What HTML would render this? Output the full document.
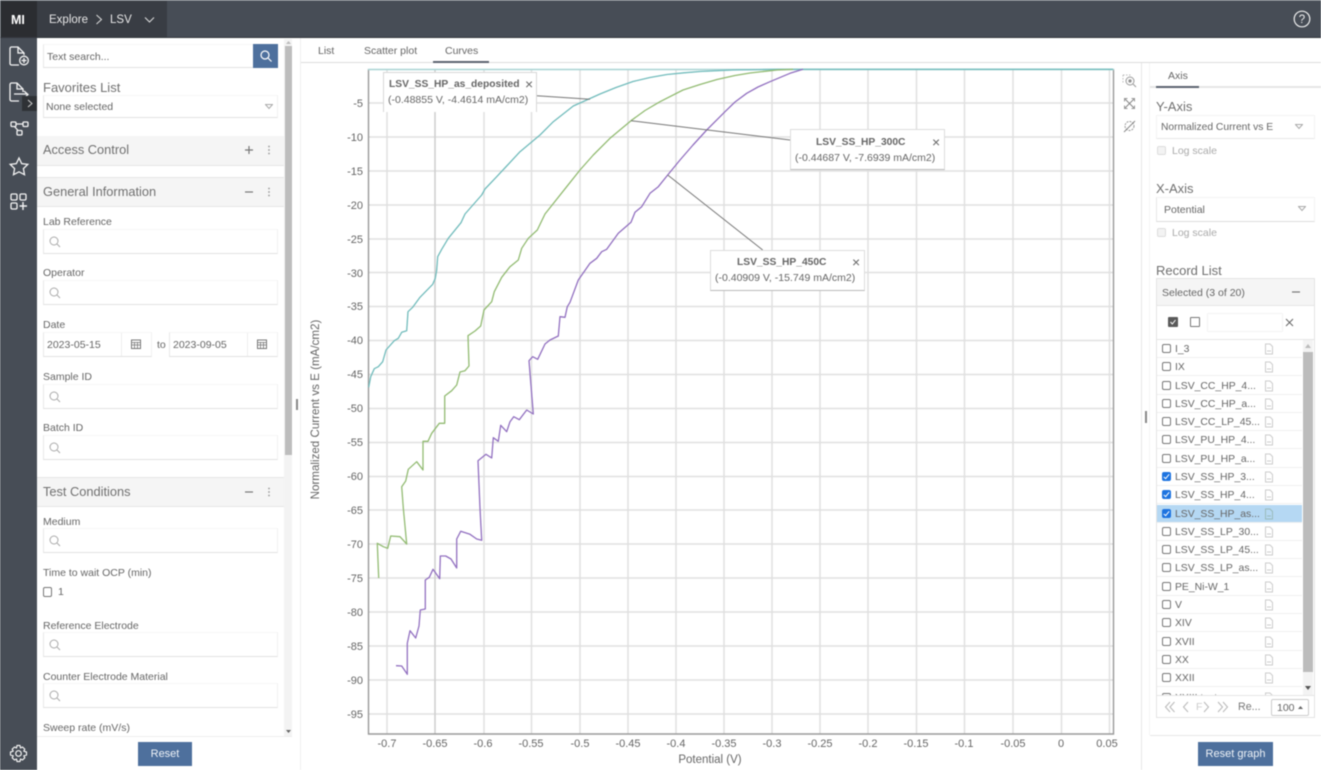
<!DOCTYPE html>
<html><head><meta charset="utf-8"><title>LSV</title>
<style>
html,body{margin:0;padding:0;width:1321px;height:770px;overflow:hidden;background:#fff}
body{font-family:"Liberation Sans",sans-serif;color:#666;position:relative}
#r{position:absolute;left:0;top:0;width:1321px;height:770px;overflow:hidden;filter:blur(.4px)}
.a{position:absolute;box-sizing:border-box}
.t{position:absolute;white-space:nowrap;line-height:14px;font-size:10.5px;color:#666;margin-top:1px}
.h{font-size:12.8px;color:#707070}
.n{margin-top:0}
.x{font-size:14px;font-weight:normal;color:#666}
.ti{font-weight:bold;font-size:10.25px}
.in{position:absolute;box-sizing:border-box;left:43px;width:235px;height:25px;background:#fff;border:1px solid #f2f2f2;border-top-color:#f6f6f6;border-left-color:#e8e8e8;border-bottom-color:#e2e2e2}
.in svg{position:absolute;left:4px;top:5px}
.sec{position:absolute;left:37px;width:247px;height:30px;background:#f5f5f5;border-bottom:1px solid #e6e6e6;box-sizing:border-box}
.btn{position:absolute;background:#4e709d;color:#eef2f7;font-size:11px;text-align:center;line-height:24px;top:742px;height:24px}
.row{position:absolute;left:1157px;width:145px;height:18px;border-bottom:1px solid #f0f0f0;box-sizing:border-box}
.row b{position:absolute;left:5px;top:4px;width:9px;height:9px;border:1px solid #777;border-radius:2px;background:#fff;box-sizing:border-box}
.row b.c{background:#1e74e0;border-color:#1e74e0}
.row b.c:after{content:"";position:absolute;left:2px;top:0;width:2px;height:5px;border:solid #fff;border-width:0 1.2px 1.2px 0;transform:rotate(40deg)}
.row span{position:absolute;left:18px;top:3px;font-size:10.4px;line-height:14px;color:#666;white-space:nowrap}
.row svg{position:absolute;left:107px;top:3px}
</style></head><body><div id="r">

<!-- top bar -->
<div class="a" style="left:0;top:0;width:1321px;height:38px;background:#474d56;border-bottom:1px solid #33373d"></div>
<div class="a" style="left:0;top:0;width:1321px;height:1px;background:#6b7178"></div>
<div class="a" style="left:37px;top:1px;width:130px;height:36px;background:#393d44"></div>
<div class="a" style="left:1px;top:1px;width:36px;height:36px;background:#2b2d31"></div>
<div class="t" style="left:11px;top:12px;font-size:12.5px;font-weight:bold;color:#fff">MI</div>
<div class="t" style="left:49px;top:12px;font-size:11.5px;color:#e8e8e8">Explore</div>
<svg class="a" style="left:95px;top:14px" width="8" height="11"><path d="M1.500 1 L6.500 5.500 L1.500 10" fill="none" stroke="#ddd" stroke-width="1"/></svg>
<div class="t" style="left:110px;top:12px;font-size:11.5px;color:#e8e8e8">LSV</div>
<svg class="a" style="left:144px;top:16px" width="11" height="8"><path d="M1 1.500 L5.500 6 L10 1.500" fill="none" stroke="#ddd" stroke-width="1"/></svg>
<svg class="a" style="left:1293px;top:10px" width="18" height="18"><circle cx="9" cy="9" r="7.800" fill="none" stroke="#eee" stroke-width="1.200"/><text x="9" y="13" font-size="11.500" font-family="Liberation Sans" fill="#eee" text-anchor="middle">?</text></svg>

<!-- left rail -->
<div class="a" style="left:0;top:38px;width:37px;height:732px;background:#474d56"></div>
<svg class="a" style="left:0;top:38px" width="37" height="180" fill="none" stroke="#f4f4f4" stroke-width="1.300">
<path d="M10 21 V10.500 a1.500 1.500 0 0 1 1.500-1.500 H18 L24 15 V17 M18 9 V15 H24 M19 27 H11.500 A1.500 1.500 0 0 1 10 25.500 V21"/>
<circle cx="24" cy="22.500" r="4.300"/><path d="M24 20 V25 M21.500 22.500 H26.500"/>
<path d="M10 57 V46.500 a1.500 1.500 0 0 1 1.500-1.500 H17 L23 51 V54 M17 45 V51 H23 M10 57 V61.500 A1.500 1.500 0 0 0 11.500 63 H19"/>
<path d="M14 56 H27 M24 53 L28 56.500 L24 60"/>
<rect x="11" y="84" width="5" height="4.500" rx="1"/><rect x="23" y="84" width="5" height="4.500" rx="1"/><rect x="17" y="92.500" width="5" height="4.500" rx="1"/>
<path d="M16 86 H23 M14.500 88.500 L18 92.500"/>
<path d="M19 120 L21.700 125.600 L27.800 126.400 L23.400 130.600 L24.500 136.700 L19 133.800 L13.500 136.700 L14.600 130.600 L10.200 126.400 L16.300 125.600 Z"/>
<rect x="11" y="156" width="6" height="6" rx="1.200"/><rect x="20" y="156" width="6" height="6" rx="1.200"/><rect x="11" y="165" width="6" height="6" rx="1.200"/>
<path d="M23 164 V172 M19.500 168 H27" stroke-width="1.400"/>
</svg>
<div class="a" style="left:22px;top:96px;width:15px;height:15px;background:#2f3236"></div>
<svg class="a" style="left:26px;top:99px" width="8" height="9"><path d="M2 1 L6 4.500 L2 8" fill="none" stroke="#ccc" stroke-width="1"/></svg>
<svg class="a" style="left:9px;top:744px" width="19" height="19" viewBox="0 0 19 19" fill="none" stroke="#f4f4f4" stroke-width="1.200"><circle cx="9.500" cy="9.500" r="2.800"/><path d="M8 1.500 H11 L11.500 4 L13.500 3 L15.800 5.200 L14.800 7.200 L17.500 8 V11 L14.800 11.800 L15.800 13.800 L13.500 16 L11.500 15 L11 17.500 H8 L7.500 15 L5.500 16 L3.200 13.800 L4.200 11.800 L1.500 11 V8 L4.200 7.200 L3.200 5.200 L5.500 3 L7.500 4 Z" stroke-linejoin="round"/></svg>

<!-- left panel -->
<div class="in" style="top:44px;width:211px;height:24px"></div>
<div class="t" style="left:47px;top:49px">Text search...</div>
<div class="a" style="left:253px;top:44px;width:25px;height:24px;background:#4e709d"></div>
<svg class="a" style="left:259px;top:49px" width="14" height="14" fill="none" stroke="#fff" stroke-width="1.200"><circle cx="6" cy="6" r="4"/><path d="M9 9 L12.500 12.500"/></svg>
<div class="t h" style="left:43px;top:80px;font-size:13px">Favorites List</div>
<div class="in" style="top:95px;height:23px"></div>
<div class="t" style="left:46px;top:99px">None selected</div>
<svg class="a" style="left:265px;top:104px" width="8" height="6"><path d="M.500 .500 H7.500 L4 4.500 Z" fill="none" stroke="#aaa"/></svg>

<div class="sec" style="top:136px"></div>
<div class="t h n" style="left:43px;top:143px">Access Control</div>
<svg class="a" style="left:244px;top:145px" width="10" height="10"><path d="M5 1 V9 M1 5 H9" stroke="#777" stroke-width="1.200"/></svg>
<svg class="a" style="left:267px;top:145px" width="4" height="10" fill="#999"><circle cx="2" cy="1.500" r=".9"/><circle cx="2" cy="5" r=".9"/><circle cx="2" cy="8.500" r=".9"/></svg>
<div class="sec" style="top:177px;border-top:1px solid #e6e6e6"></div>
<div class="t h n" style="left:43px;top:185px">General Information</div>
<svg class="a" style="left:244px;top:187px" width="10" height="10"><path d="M1 5 H9" stroke="#777" stroke-width="1.200"/></svg>
<svg class="a" style="left:267px;top:187px" width="4" height="10" fill="#999"><circle cx="2" cy="1.500" r=".9"/><circle cx="2" cy="5" r=".9"/><circle cx="2" cy="8.500" r=".9"/></svg>

<div class="t" style="left:43px;top:214px">Lab Reference</div>
<div class="in" style="top:229px"><svg width="14" height="14" fill="none" stroke="#aaa"><circle cx="6" cy="6" r="4"/><path d="M9 9 L12 12"/></svg></div>
<div class="t" style="left:43px;top:265px">Operator</div>
<div class="in" style="top:280px"><svg width="14" height="14" fill="none" stroke="#aaa"><circle cx="6" cy="6" r="4"/><path d="M9 9 L12 12"/></svg></div>
<div class="t" style="left:43px;top:317px">Date</div>
<div class="in" style="top:332px;width:109px"></div>
<div class="a" style="left:121px;top:333px;width:1px;height:23px;background:#eee"></div>
<div class="t" style="left:47px;top:337px">2023-05-15</div>
<svg class="a" style="left:131px;top:339px" width="10" height="10"><rect x=".5" y="1" width="9" height="8.500" fill="#fff" stroke="#777"/><path d="M.5 3.500 H9.500 M.5 6 H9.500 M3.500 3 V9 M6.500 3 V9" stroke="#777" stroke-width=".8"/></svg>
<div class="t" style="left:157px;top:337px">to</div>
<div class="in" style="top:332px;left:169px;width:109px"></div>
<div class="a" style="left:247px;top:333px;width:1px;height:23px;background:#eee"></div>
<div class="t" style="left:173px;top:337px">2023-09-05</div>
<svg class="a" style="left:257px;top:339px" width="10" height="10"><rect x=".5" y="1" width="9" height="8.500" fill="#fff" stroke="#777"/><path d="M.5 3.500 H9.500 M.5 6 H9.500 M3.500 3 V9 M6.500 3 V9" stroke="#777" stroke-width=".8"/></svg>
<div class="t" style="left:43px;top:369px">Sample ID</div>
<div class="in" style="top:384px"><svg width="14" height="14" fill="none" stroke="#aaa"><circle cx="6" cy="6" r="4"/><path d="M9 9 L12 12"/></svg></div>
<div class="t" style="left:43px;top:420px">Batch ID</div>
<div class="in" style="top:435px"><svg width="14" height="14" fill="none" stroke="#aaa"><circle cx="6" cy="6" r="4"/><path d="M9 9 L12 12"/></svg></div>

<div class="sec" style="top:477px;border-top:1px solid #e6e6e6"></div>
<div class="t h n" style="left:43px;top:485px">Test Conditions</div>
<svg class="a" style="left:244px;top:487px" width="10" height="10"><path d="M1 5 H9" stroke="#777" stroke-width="1.200"/></svg>
<svg class="a" style="left:267px;top:487px" width="4" height="10" fill="#999"><circle cx="2" cy="1.500" r=".9"/><circle cx="2" cy="5" r=".9"/><circle cx="2" cy="8.500" r=".9"/></svg>
<div class="t" style="left:43px;top:514px">Medium</div>
<div class="in" style="top:528px"><svg width="14" height="14" fill="none" stroke="#aaa"><circle cx="6" cy="6" r="4"/><path d="M9 9 L12 12"/></svg></div>
<div class="t" style="left:43px;top:565px">Time to wait OCP (min)</div>
<div class="a" style="left:43px;top:587px;width:9px;height:10px;border:1px solid #777;border-radius:2px"></div>
<div class="t" style="left:58px;top:584px">1</div>
<div class="t" style="left:43px;top:618px">Reference Electrode</div>
<div class="in" style="top:632px"><svg width="14" height="14" fill="none" stroke="#aaa"><circle cx="6" cy="6" r="4"/><path d="M9 9 L12 12"/></svg></div>
<div class="t" style="left:43px;top:669px">Counter Electrode Material</div>
<div class="in" style="top:683px"><svg width="14" height="14" fill="none" stroke="#aaa"><circle cx="6" cy="6" r="4"/><path d="M9 9 L12 12"/></svg></div>
<div class="t" style="left:43px;top:720px">Sweep rate (mV/s)</div>
<div class="a" style="left:37px;top:736px;width:255px;height:34px;background:#fff;border-top:1px solid #eee"></div>
<div class="a" style="left:284px;top:39px;width:8px;height:697px;background:#f3f3f3"></div>
<div class="a" style="left:285px;top:46px;width:7px;height:409px;background:#bdbdbd"></div>
<svg class="a" style="left:285px;top:40px" width="7" height="5"><path d="M3.500 1 L6 4 H1 Z" fill="#bbb"/></svg>
<svg class="a" style="left:285px;top:729px" width="7" height="5"><path d="M3.500 4 L6 1 H1 Z" fill="#666"/></svg>
<div class="btn" style="left:138px;width:54px">Reset</div>
<div class="a" style="left:296px;top:399px;width:2px;height:11px;background:#888"></div>
<div class="a" style="left:300px;top:38px;width:1px;height:732px;background:#f0f0f0"></div>

<!-- tabs -->
<div class="t" style="left:318px;top:43px">List</div>
<div class="t" style="left:364px;top:43px">Scatter plot</div>
<div class="t" style="left:445px;top:43px">Curves</div>
<div class="a" style="left:301px;top:62px;width:1020px;height:1px;background:#ddd"></div>
<div class="a" style="left:433px;top:61px;width:56px;height:2px;background:#5c6470"></div>

<!-- chart -->
<svg class="a" style="left:301px;top:63px" width="840" height="707" viewBox="301 63 840 707">
<g stroke="#e0e0e0" stroke-width="1.500" fill="none">
<path d="M369 103H1113M369 137H1113M369 171H1113M369 205H1113M369 239H1113M369 272.500H1113M369 306.500H1113M369 340.500H1113M369 374.500H1113M369 408.500H1113M369 442.500H1113M369 476.500H1113M369 510H1113M369 544H1113M369 578H1113M369 612H1113M369 646H1113M369 680H1113M369 714H1113"/>
<path d="M387 69V734M531.500 69V734M628 69V734M724 69V734M772 69V734M868 69V734M964.500 69V734M1013 69V734M1061.500 69V734M1109.500 69V734M484 69V734M580 69V734M676 69V734M820 69V734M916.500 69V734"/>
<path d="M435 69V734" stroke="#cdcdcd"/>
</g>
<path d="M368.500 69V734H1113.500V69" fill="none" stroke="#9a9a9a" stroke-width="1.400"/>
<path d="M368 69.500H1114" stroke="#a9d3d3" stroke-width="1.600"/>

<g fill="#666" font-size="11" font-family="Liberation Sans" text-anchor="end">
<text x="363" y="107">-5</text><text x="363" y="141">-10</text><text x="363" y="175">-15</text><text x="363" y="209">-20</text><text x="363" y="243">-25</text><text x="363" y="277">-30</text><text x="363" y="310">-35</text><text x="363" y="344">-40</text><text x="363" y="378">-45</text><text x="363" y="412">-50</text><text x="363" y="446">-55</text><text x="363" y="480">-60</text><text x="363" y="514">-65</text><text x="363" y="548">-70</text><text x="363" y="582">-75</text><text x="363" y="616">-80</text><text x="363" y="650">-85</text><text x="363" y="684">-90</text><text x="363" y="718">-95</text>
</g>
<g fill="#666" font-size="11" font-family="Liberation Sans" text-anchor="middle">
<text x="387" y="747">-0.7</text><text x="435" y="747">-0.65</text><text x="483" y="747">-0.6</text><text x="531" y="747">-0.55</text><text x="580" y="747">-0.5</text><text x="628" y="747">-0.45</text><text x="676" y="747">-0.4</text><text x="724" y="747">-0.35</text><text x="772" y="747">-0.3</text><text x="820" y="747">-0.25</text><text x="868" y="747">-0.2</text><text x="916" y="747">-0.15</text><text x="964" y="747">-0.1</text><text x="1013" y="747">-0.05</text><text x="1061" y="747">0</text><text x="1107" y="747">0.05</text>
<text x="710" y="763" font-size="11.500">Potential (V)</text>
<text transform="translate(319,409.500) rotate(-90)" font-size="11.600">Normalized Current vs E (mA/cm2)</text>
</g>

<g fill="none" stroke-width="1.300" stroke-linejoin="round">
<path stroke="#72bcbc" d="M368.700 387.300L370.700 376.700L374.300 368.700L378.300 366.700L382.700 361.700L386 350L394.300 340.700L398.300 338.300L401.700 332.300L406.700 330.700L408 311.700L412.700 307.300L420 297.300L432.700 284.300L435.300 278.300L436.700 270L437.700 256.700L441.700 249.300L448.300 238.300L461 222.700L465 214L481.700 195L485 189L496.700 176.700L506.700 166L520 151.700L540 135L553.300 121.700L573.300 106L590 98.500L600 94L616 87.500L633 81.500L650 77.500L667 74.500L684 72.800L700 71.500L733 70L777 69.300L1113 69.300"/>
<path stroke="#92bb72" d="M378.700 578L377.300 543.300L383.300 546.700L387.700 548.300L390.700 536L400 536.700L406.700 544L403.300 508L401.700 486.700L405.700 481L408.300 469.300L416.700 461.700L423 470L423 441.300L428 441.300L431.700 433.300L439.300 423.300L444.700 423.300L444.700 396L451.700 390.700L456.700 385L460 372L465 370.700L469 366L468 335.700L475 331L480.700 326L484 310L491.700 301.700L494.300 291.700L501.700 277.300L510 266.700L518.300 260L521.700 248.300L528.300 238.300L537.300 230L545 214L566.700 186.700L580 170L593.300 155L610 138.300L631 120.700L645 110.500L660 101.700L683 90L700 84.500L717 79.500L735 75.500L750 73L777 70L793 69.300"/>
<path stroke="#9270c0" d="M396 665.700L401.700 666L407.300 674.300L407.300 643.300L410 630.700L415.700 638L419 626L420.300 610L425.300 609L425.300 580L429.300 577.300L433 569.300L439.700 578.700L440.300 556L445.700 556L451 559L456.700 568L456.700 539L460.700 531.300L470 534.300L476.700 539L481.700 540.300L480 508.300L478 460.700L486 454.300L491.700 458L493.300 437.700L498.300 441.300L500.700 425.300L506.700 431.700L510 421.700L513.700 416.700L519.300 419.700L526.700 410L533.300 414L529 360.700L532.700 356.700L537.700 359.300L545 344L550 340L558.300 336L560 316.700L565 317.300L567.300 306.700L570 302.300L578.300 280L590 263.300L596.700 258.300L601.700 251.700L606.700 249.300L618.300 233.300L631 222.300L635 212.300L641.700 206.700L650 193.300L658.300 186.700L667.700 175L680 160L693 145L706.700 130L725 111.700L735 102L746.700 93.300L758 87L770 81.700L790 73.300L803 69.300"/>
</g>
<g stroke="#777" stroke-width="1" fill="none">
<path d="M536.700 95.700L590 99.300"/><path d="M631 120.700L790 140"/><path d="M667.700 175L762.700 250"/>
</g>
</svg>

<!-- tooltips -->
<div class="a" style="left:383px;top:72px;width:154px;height:40px;background:#fff;border:1px solid #d8d8d8;border-bottom:0"></div>
<div class="t ti" style="left:389px;top:77px">LSV_SS_HP_as_deposited</div>
<div class="t x" style="left:525px;top:76px">×</div>
<div class="t" style="left:388px;top:92px">(-0.48855 V, -4.4614 mA/cm2)</div>

<div class="a" style="left:790px;top:129px;width:155px;height:41px;background:#fff;border:1px solid #ddd;border-bottom:1px solid #bbb"></div>
<div class="t ti" style="left:816px;top:135px">LSV_SS_HP_300C</div>
<div class="t x" style="left:932px;top:134px">×</div>
<div class="t" style="left:795px;top:150px">(-0.44687 V, -7.6939 mA/cm2)</div>

<div class="a" style="left:710px;top:250px;width:155px;height:41px;background:#fff;border:1px solid #ddd;border-bottom:1px solid #bbb"></div>
<div class="t ti" style="left:737px;top:255px">LSV_SS_HP_450C</div>
<div class="t x" style="left:852px;top:254px">×</div>
<div class="t" style="left:715px;top:270px">(-0.40909 V, -15.749 mA/cm2)</div>

<!-- toolbar -->
<svg class="a" style="left:1121px;top:72px" width="18" height="70" fill="none" stroke="#999">
<path d="M2 3H10M2 3V11" stroke-dasharray="1.500 1.500" stroke="#bbb"/><circle cx="9" cy="9" r="4"/><circle cx="9" cy="9" r="1.200" fill="#888"/><path d="M12 12L15 15"/>
<path d="M4 27L13 36M13 27L4 36" stroke="#888"/><path d="M3.500 29.500V26.500H6.500M10.500 26.500H13.500V29.500M13.500 33.500V36.500H10.500M6.500 36.500H3.500V33.500"/>
<circle cx="8.500" cy="54" r="4.500" stroke-dasharray="2 1"/><path d="M3 60L14 49" stroke="#888"/>
</svg>

<!-- right panel -->
<div class="a" style="left:1141px;top:63px;width:1px;height:707px;background:#e8e8e8"></div>
<div class="a" style="left:1149px;top:63px;width:1px;height:672px;background:#f6f6f6"></div>
<div class="a" style="left:1145px;top:411px;width:2px;height:12px;background:#888"></div>
<div class="t" style="left:1168px;top:68px">Axis</div>
<div class="a" style="left:1150px;top:86px;width:171px;height:2px;background:#e6e6e6"></div>
<div class="a" style="left:1156px;top:85.500px;width:43px;height:2px;background:#5c6470"></div>
<div class="t h" style="left:1156px;top:99px;font-size:13px">Y-Axis</div>
<div class="a" style="left:1156px;top:115px;width:159px;height:24px;border:1px solid #f4f4f4;border-bottom-color:#e8e8e8"></div>
<div class="t" style="left:1161px;top:120px;font-size:10.300px">Normalized Current vs E</div>
<svg class="a" style="left:1295px;top:124px" width="8" height="6"><path d="M.500 .500H7.500L4 4.500Z" fill="none" stroke="#aaa"/></svg>
<div class="a" style="left:1157px;top:146px;width:9px;height:9px;border:1px solid #ddd;background:#f3f3f3;border-radius:2px"></div>
<div class="t" style="left:1172px;top:143px;color:#aaa">Log scale</div>
<div class="t h n" style="left:1156px;top:182px;font-size:13px">X-Axis</div>
<div class="a" style="left:1156px;top:197px;width:159px;height:25px;border:1px solid #f4f4f4;border-left-color:#e8e8e8;border-bottom-color:#ddd"></div>
<div class="t" style="left:1164px;top:202px">Potential</div>
<svg class="a" style="left:1298px;top:206px" width="8" height="6"><path d="M.500 .500H7.500L4 4.500Z" fill="none" stroke="#aaa"/></svg>
<div class="a" style="left:1157px;top:228px;width:9px;height:9px;border:1px solid #ddd;background:#f3f3f3;border-radius:2px"></div>
<div class="t" style="left:1172px;top:225px;color:#aaa">Log scale</div>
<div class="t h" style="left:1156px;top:263px;font-size:13px">Record List</div>

<div class="a" style="left:1156px;top:278px;width:159px;height:440px;border:1px solid #e4e4e4"></div>
<div class="a" style="left:1157px;top:279px;width:157px;height:27px;background:#f5f5f5;border-bottom:1px solid #e6e6e6"></div>
<div class="t" style="left:1162px;top:285px">Selected (3 of 20)</div>
<svg class="a" style="left:1291px;top:287px" width="10" height="10"><path d="M1 5H9" stroke="#777" stroke-width="1.200"/></svg>
<div class="a" style="left:1168px;top:317px;width:10px;height:10px;background:#5a5a5a;border-radius:1px"></div>
<svg class="a" style="left:1169px;top:318px" width="8" height="8"><path d="M1.500 4L3.300 6L6.500 2" fill="none" stroke="#fff"/></svg>
<div class="a" style="left:1190px;top:317px;width:10px;height:10px;border:1px solid #777;border-radius:1px"></div>
<div class="a" style="left:1207px;top:313px;width:76px;height:19px;background:#fff;border:1px solid #f4f4f4"></div>
<svg class="a" style="left:1285px;top:318px" width="9" height="9"><path d="M1 1L8 8M8 1L1 8" stroke="#666" stroke-width="1"/></svg>
<div class="a" style="left:1157px;top:339px;width:157px;height:1px;background:#e6e6e6"></div>

<div class="row" style="top:340px"><b></b><span>I_3</span><svg width="10" height="12" fill="none" stroke="#ccc"><path d="M1.500 1H6L8.500 3.500V11H1.500ZM3 8H7"/></svg></div>
<div class="row" style="top:358.300px"><b></b><span>IX</span><svg width="10" height="12" fill="none" stroke="#ccc"><path d="M1.500 1H6L8.500 3.500V11H1.500ZM3 8H7"/></svg></div>
<div class="row" style="top:376.600px"><b></b><span>LSV_CC_HP_4...</span><svg width="10" height="12" fill="none" stroke="#ccc"><path d="M1.500 1H6L8.500 3.500V11H1.500ZM3 8H7"/></svg></div>
<div class="row" style="top:394.800px"><b></b><span>LSV_CC_HP_a...</span><svg width="10" height="12" fill="none" stroke="#ccc"><path d="M1.500 1H6L8.500 3.500V11H1.500ZM3 8H7"/></svg></div>
<div class="row" style="top:413.100px"><b></b><span>LSV_CC_LP_45...</span><svg width="10" height="12" fill="none" stroke="#ccc"><path d="M1.500 1H6L8.500 3.500V11H1.500ZM3 8H7"/></svg></div>
<div class="row" style="top:431.400px"><b></b><span>LSV_PU_HP_4...</span><svg width="10" height="12" fill="none" stroke="#ccc"><path d="M1.500 1H6L8.500 3.500V11H1.500ZM3 8H7"/></svg></div>
<div class="row" style="top:449.700px"><b></b><span>LSV_PU_HP_a...</span><svg width="10" height="12" fill="none" stroke="#ccc"><path d="M1.500 1H6L8.500 3.500V11H1.500ZM3 8H7"/></svg></div>
<div class="row" style="top:468px"><b class="c"></b><span>LSV_SS_HP_3...</span><svg width="10" height="12" fill="none" stroke="#ccc"><path d="M1.500 1H6L8.500 3.500V11H1.500ZM3 8H7"/></svg></div>
<div class="row" style="top:486.200px"><b class="c"></b><span>LSV_SS_HP_4...</span><svg width="10" height="12" fill="none" stroke="#ccc"><path d="M1.500 1H6L8.500 3.500V11H1.500ZM3 8H7"/></svg></div>
<div class="row" style="top:504.500px;background:#b5d8f3"><b class="c"></b><span>LSV_SS_HP_as...</span><svg width="10" height="12" fill="none" stroke="#9bb"><path d="M1.500 1H6L8.500 3.500V11H1.500ZM3 8H7"/></svg></div>
<div class="row" style="top:522.800px"><b></b><span>LSV_SS_LP_30...</span><svg width="10" height="12" fill="none" stroke="#ccc"><path d="M1.500 1H6L8.500 3.500V11H1.500ZM3 8H7"/></svg></div>
<div class="row" style="top:541.100px"><b></b><span>LSV_SS_LP_45...</span><svg width="10" height="12" fill="none" stroke="#ccc"><path d="M1.500 1H6L8.500 3.500V11H1.500ZM3 8H7"/></svg></div>
<div class="row" style="top:559.400px"><b></b><span>LSV_SS_LP_as...</span><svg width="10" height="12" fill="none" stroke="#ccc"><path d="M1.500 1H6L8.500 3.500V11H1.500ZM3 8H7"/></svg></div>
<div class="row" style="top:577.600px"><b></b><span>PE_Ni-W_1</span><svg width="10" height="12" fill="none" stroke="#ccc"><path d="M1.500 1H6L8.500 3.500V11H1.500ZM3 8H7"/></svg></div>
<div class="row" style="top:595.900px"><b></b><span>V</span><svg width="10" height="12" fill="none" stroke="#ccc"><path d="M1.500 1H6L8.500 3.500V11H1.500ZM3 8H7"/></svg></div>
<div class="row" style="top:614.200px"><b></b><span>XIV</span><svg width="10" height="12" fill="none" stroke="#ccc"><path d="M1.500 1H6L8.500 3.500V11H1.500ZM3 8H7"/></svg></div>
<div class="row" style="top:632.500px"><b></b><span>XVII</span><svg width="10" height="12" fill="none" stroke="#ccc"><path d="M1.500 1H6L8.500 3.500V11H1.500ZM3 8H7"/></svg></div>
<div class="row" style="top:650.700px"><b></b><span>XX</span><svg width="10" height="12" fill="none" stroke="#ccc"><path d="M1.500 1H6L8.500 3.500V11H1.500ZM3 8H7"/></svg></div>
<div class="row" style="top:669px"><b></b><span>XXII</span><svg width="10" height="12" fill="none" stroke="#ccc"><path d="M1.500 1H6L8.500 3.500V11H1.500ZM3 8H7"/></svg></div>
<div class="row" style="top:687.300px;height:8px;overflow:hidden;border:0"><b style="top:6px"></b><span style="top:5px">XXIII test</span><svg style="top:5px" width="10" height="12" fill="none" stroke="#ccc"><path d="M1.500 1H6L8.500 3.500V11H1.500ZM3 8H7"/></svg></div>

<div class="a" style="left:1303px;top:340px;width:10px;height:355px;background:#f3f3f3"></div>
<div class="a" style="left:1303px;top:352px;width:10px;height:320px;background:#bcbcbc"></div>
<svg class="a" style="left:1304px;top:343px" width="8" height="6"><path d="M4 1L7 5H1Z" fill="#bbb"/></svg>
<svg class="a" style="left:1304px;top:685px" width="8" height="6"><path d="M4 5L7 1H1Z" fill="#555"/></svg>
<div class="a" style="left:1157px;top:695px;width:157px;height:1px;background:#e6e6e6"></div>

<svg class="a" style="left:1164px;top:700px" width="68" height="14" fill="none" stroke="#bbb" stroke-width="1.100"><path d="M6 2L1.500 7L6 12M10.500 2L6 7L10.500 12M24 2L19.500 7L24 12M40 2L44.500 7L40 12M54 2L58.500 7L54 12M59 2L63.500 7L59 12"/></svg>
<div class="t" style="left:1196px;top:699px;color:#ccc">F</div>
<div class="t" style="left:1238px;top:699px;font-size:10.700px;color:#777">Re...</div>
<div class="a" style="left:1271px;top:699px;width:38px;height:17px;border:1px solid #ccc;border-radius:2px"></div>
<div class="t" style="left:1277px;top:700px">100</div>
<svg class="a" style="left:1297px;top:705px" width="7" height="5"><path d="M3.500 1L6 4H1Z" fill="#666"/></svg>

<div class="a" style="left:1150px;top:735px;width:171px;height:1px;background:#e8e8e8"></div>
<div class="btn" style="left:1198px;width:75px">Reset graph</div>
</div></body></html>
